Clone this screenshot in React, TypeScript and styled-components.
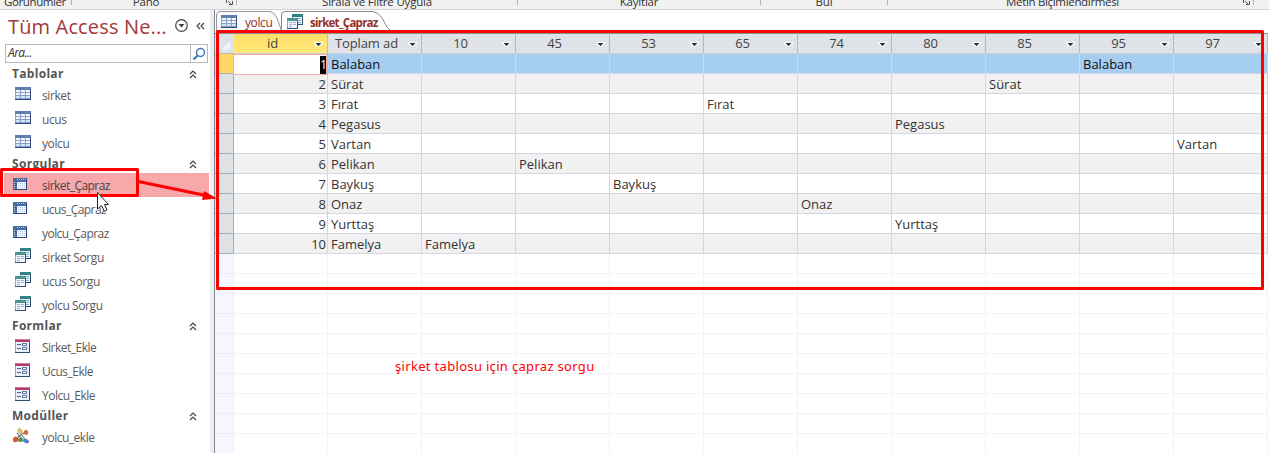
import React from "react";
import styled, { createGlobalStyle } from "styled-components";

const Global = createGlobalStyle`
  * { box-sizing: border-box; }
  body { margin: 0; background: #fff; overflow: hidden; font-family: "Open Sans", "Noto Sans", sans-serif; }
`;

const Window = styled.div`
  position: relative;
  width: 1269px;
  height: 453px;
  overflow: hidden;
  display: flex;
  flex-direction: column;
  background: #fff;
`;

const Ribbon = styled.header`
  display: flex;
  flex: none;
  height: 10px;
  background: #f1f1f1;
  border-bottom: 1px solid #d2d2d2;
`;
const RibbonGroup = styled.div<{ $w: number; $pad?: number }>`
  position: relative;
  flex: none;
  display: flex;
  justify-content: center;
  width: ${(p) => p.$w}px;
  height: 5px;
  padding-right: ${(p) => p.$pad ?? 0}px;
  border-right: 1px solid #b4b4b4;
`;
const RibbonLabel = styled.span<{ $ls?: number }>`
  margin-top: -7px;
  height: 17px;
  font-size: 11.5px;
  line-height: 17px;
  letter-spacing: ${(p) => p.$ls ?? -0.2}px;
  white-space: nowrap;
  color: #333;
`;
const Launcher = styled.svg`
  position: absolute;
  right: 2px;
  top: 0;
`;

const Body = styled.div`
  display: flex;
  flex: 1;
  min-height: 0;
`;

const Sidebar = styled.aside`
  flex: none;
  display: flex;
  flex-direction: column;
  width: 215px;
  border-right: 1px solid #80848c;
  background: linear-gradient(to right, #fff 210px, #edeef2 210px);
`;
const TitleRow = styled.div`
  display: flex;
  align-items: center;
  height: 34px;
  padding-left: 8px;
  svg { margin-top: -2px; }
`;
const Title = styled.h1`
  margin: 0;
  width: 166px;
  font-size: 20px;
  font-weight: 400;
  line-height: 34px;
  letter-spacing: 0.15px;
  white-space: nowrap;
  color: #a4373a;
`;
const SearchBox = styled.div`
  display: flex;
  flex: none;
  width: 203px;
  height: 19px;
  margin: 0 0 2px 5px;
  border: 1px solid #b9b9b9;
`;
const SearchText = styled.span`
  flex: 1;
  padding-left: 2px;
  font-size: 12px;
  font-style: italic;
  line-height: 16px;
  letter-spacing: -0.6px;
  color: #333;
`;
const SearchButton = styled.span`
  display: flex;
  align-items: center;
  justify-content: center;
  width: 17px;
  border-left: 1px solid #b9b9b9;
`;
const GroupHeader = styled.div`
  display: flex;
  flex: none;
  align-items: center;
  justify-content: space-between;
  height: 18px;
  padding: 0 17px 0 12px;
  font-size: 12px;
  font-weight: 700;
  line-height: 18px;
  letter-spacing: 0.3px;
  color: #555;
`;
const Item = styled.div<{ $selected?: boolean }>`
  display: flex;
  flex: none;
  align-items: center;
  width: 205px;
  height: 24px;
  margin-left: 4px;
  font-size: 12px;
  line-height: 22px;
  color: ${(p) => (p.$selected ? "#444" : "#5a5a5a")};
  background: ${(p) => (p.$selected ? "#f7a8ab" : "transparent")};
`;
const IconSlot = styled.span<{ $x: number }>`
  display: flex;
  width: 38px;
  padding-left: ${(p) => p.$x - 4}px;
  svg { margin-top: -3px; }
`;
const ItemText = styled.span<{ $ls: number }>`
  padding-top: 2px;
  letter-spacing: ${(p) => p.$ls}px;
  white-space: nowrap;
`;

const Content = styled.main`
  flex: 1;
  min-width: 0;
  display: flex;
  flex-direction: column;
`;
const Tabs = styled.div`
  position: relative;
  display: flex;
  flex: none;
  height: 23px;
`;
const TabShapes = styled.svg`
  position: absolute;
  left: 0;
  top: 0;
`;
const Tab = styled.div<{ $w: number; $pad: number; $gap: number; $active?: boolean }>`
  position: relative;
  display: flex;
  align-items: center;
  gap: ${(p) => p.$gap}px;
  width: ${(p) => p.$w}px;
  padding: 1px 0 0 ${(p) => p.$pad}px;
  font-size: ${(p) => (p.$active ? 11.5 : 12)}px;
  font-weight: ${(p) => (p.$active ? 700 : 400)};
  letter-spacing: ${(p) => (p.$active ? -0.75 : -0.4)}px;
  white-space: nowrap;
  color: #95302f;
  svg { margin-top: -2px; }
`;

const Sheet = styled.div`
  display: grid;
  grid-template-columns: 19px repeat(11, 94px) 1px;
  grid-template-rows: 21px;
  grid-auto-rows: 20px;
`;
const HeadCell = styled.div<{ $active?: boolean }>`
  display: flex;
  align-items: center;
  padding: 0 4px 0 0;
  border-top: 1px solid #8a8e94;
  border-right: 1px solid ${(p) => (p.$active ? "#c5bfa0" : "#b4b9c0")};
  border-bottom: 1px solid #cdd2d9;
  font-size: 13px;
  line-height: 18px;
  color: #444;
  background: ${(p) => (p.$active ? "linear-gradient(#ffdf69, #ffe979)" : "#dfe2e6")};
  svg { flex: none; margin-top: 2px; }
`;
const HeadText = styled.span`
  flex: 1;
  padding: 0 3px 1px 0;
  text-align: center;
  letter-spacing: -0.1px;
  white-space: nowrap;
`;
const CornerCell = styled.div`
  display: flex;
  align-items: flex-end;
  justify-content: flex-end;
  padding: 0 3px 3px 0;
  border-top: 1px solid #8a8e94;
  background: #dfe2e6;
  border-bottom: 1px solid #b4b9c0;
`;
const Selector = styled.div<{ $active?: boolean; $empty?: boolean }>`
  border-right: 1px solid ${(p) => (p.$empty ? "#eceef4" : "#a9adb3")};
  border-bottom: 1px solid ${(p) => (p.$empty ? "#eaecf5" : "#a9adb3")};
  background: ${(p) => (p.$empty ? "#f6f7fe" : p.$active ? "#ffd863" : "#dfe2e5")};
`;
type Tone = "current" | "even" | "odd" | "empty";
const fills: Record<Tone, string> = { current: "#a5cef1", even: "#f1f1f1", odd: "#fff", empty: "#fff" };
const Cell = styled.div<{ $tone: Tone; $right?: boolean }>`
  height: 20px;
  padding: 0 ${(p) => (p.$right ? 1 : 3)}px;
  border-right: 1px solid ${(p) => (p.$tone === "empty" ? "#f2f3f4" : "#d0d7e5")};
  border-bottom: 1px solid ${(p) => (p.$tone === "empty" ? "#f2f3f4" : "#d0d7e5")};
  font-size: 13px;
  line-height: 20px;
  text-align: ${(p) => (p.$right ? "right" : "left")};
  white-space: nowrap;
  color: ${(p) => (p.$tone === "current" ? "#111" : "#333")};
  background: ${(p) => fills[p.$tone]};
`;
const EditCell = styled.div`
  display: flex;
  justify-content: flex-end;
  height: 21px;
  width: 95px;
  margin-left: -1px;
  padding: 1px 0 0;
  border: 1px solid #f5a9ac;
  border-right-width: 2px;
  background: #fff;
  z-index: 1;
`;
const Selection = styled.span`
  width: 6px;
  height: 18px;
  font-size: 12.5px;
  line-height: 18px;
  color: #fff;
  background: #000;
`;

const Overlay = styled.svg`
  position: absolute;
  inset: 0;
  z-index: 5;
`;
const Note = styled.p`
  position: absolute;
  left: 395px;
  top: 357px;
  margin: 0;
  font-family: "Noto Sans", sans-serif;
  font-size: 13px;
  line-height: 18px;
  letter-spacing: 0.32px;
  white-space: nowrap;
  color: #f00;
`;

const TableIcon = () => (
  <svg width="16" height="13" shapeRendering="crispEdges">
    <rect width="16" height="13" fill="#8ba0c6" />
    <rect width="16" height="3" fill="#5f7fb5" />
    {[3, 6, 9].map((y) =>
      [1, 6, 11].map((x) => <rect key={`${x}-${y}`} x={x} y={y} width="4" height="2" fill={y === 9 ? "#d3e1f5" : "#f4f8ff"} />)
    )}
    <path d="M0 12.5H16M15.5 2V13" stroke="#314b7e" />
  </svg>
);
const CrosstabIcon = () => (
  <svg width="14" height="12" shapeRendering="crispEdges">
    <rect width="14" height="12" fill="#4a6aa2" />
    <rect x="4" y="4" width="9" height="7" fill="#f3f7ff" />
    <path d="M4 1.5H13" stroke="#b9cbe8" strokeDasharray="1 1" />
    <path d="M1.500 4V11" stroke="#b9cbe8" strokeDasharray="1 1" />
    <path d="M5 5.500H12M5 7.500H12M5 9.500H12" stroke="#b4c5e2" strokeDasharray="1 1" />
    <path d="M0 11.500H14M13.500 0V12" stroke="#2b4478" />
  </svg>
);
const QueryIcon = () => (
  <svg width="16" height="15" shapeRendering="crispEdges">
    <rect x="5" y="0" width="11" height="11" fill="#8fa5c2" />
    <rect x="5" y="0" width="11" height="3" fill="#2f8184" />
    <rect x="6" y="3" width="9" height="7" fill="#edf3fc" />
    <path d="M11 4.500H14M11 6.500H14M11 8.500H14" stroke="#9ab0d0" />
    <path d="M15.500 3V11M6 10.500H16" stroke="#334d7b" />
    <rect x="0" y="4" width="11" height="11" fill="#8fa5c2" />
    <rect x="0" y="4" width="11" height="3" fill="#4a9694" />
    <rect x="1" y="7" width="9" height="7" fill="#f4f8ff" />
    <path d="M2 8.500H5M6 8.500H9M2 10.500H5M6 10.500H9M2 12.500H5" stroke="#9ab0d0" />
    <path d="M10.500 7V15M0 14.500H11" stroke="#334d7b" />
  </svg>
);
const FormIcon = () => (
  <svg width="15" height="14" shapeRendering="crispEdges">
    <rect width="15" height="14" fill="#8fa3c8" />
    <rect width="15" height="3" fill="#b83b6c" />
    <path d="M0 .5H15" stroke="#d0779a" />
    <rect x="1" y="3" width="13" height="10" fill="#eaf0fb" />
    <path d="M2 5.500H6M2 9.500H6" stroke="#4f5f8a" />
    <rect x="7.500" y="4.500" width="4" height="2" fill="#fff" stroke="#6678a4" />
    <rect x="7.500" y="8.500" width="4" height="2" fill="#fff" stroke="#6678a4" />
    <path d="M14.500 3V14M0 13.500H15" stroke="#334b78" />
  </svg>
);
const ModuleIcon = () => (
  <svg width="16" height="16">
    <path d="M3 11L12 4M7 4L13 13M4 5L9 11" stroke="#4a4a4a" strokeWidth="1.200" strokeDasharray="1.500 .6" />
    <ellipse cx="7" cy="3" rx="1.800" ry="2.600" transform="rotate(-30 7 3)" fill="#e6cf62" stroke="#a28b34" strokeWidth=".5" />
    <ellipse cx="13" cy="4.500" rx="1.800" ry="2.300" fill="#ea6841" stroke="#a33e20" strokeWidth=".5" />
    <ellipse cx="2.500" cy="11.500" rx="2.300" ry="2.500" fill="#e5532e" stroke="#9b3018" strokeWidth=".5" />
    <ellipse cx="7.500" cy="12" rx="2.300" ry="1.800" fill="#43a047" stroke="#23652b" strokeWidth=".5" />
    <ellipse cx="13" cy="13" rx="2.800" ry="1.700" transform="rotate(25 13 13)" fill="#4f83dd" stroke="#3058a5" strokeWidth=".5" />
  </svg>
);
const Chevrons = () => (
  <svg width="8" height="9" fill="none" stroke="#444" strokeWidth="1.200">
    <path d="M1 4L4 1L7 4M1 8L4 5L7 8" />
  </svg>
);
const DropArrow = () => (
  <svg width="9" height="5">
    <path d="M0 0H9V1.500L5.500 5H3.500L0 1.500Z" fill="#fff" />
    <path d="M1.500 1H7.500L4.500 4.200Z" fill="#2c3433" />
  </svg>
);
const LauncherIcon = () => (
  <Launcher width="9" height="7" fill="none" stroke="#555">
    <path d="M1.500 0V3M3 1L7 5M7.500 1V4.500H4" />
  </Launcher>
);

const icons = {
  table: { x: 15, ls: -0.4, El: TableIcon },
  crosstab: { x: 13, ls: -0.55, El: CrosstabIcon },
  query: { x: 15, ls: -0.4, El: QueryIcon },
  form: { x: 15, ls: -0.5, El: FormIcon },
  module: { x: 13, ls: -0.5, El: ModuleIcon },
};
const groups: { name: string; items: [keyof typeof icons, string][] }[] = [
  { name: "Tablolar", items: [["table", "sirket"], ["table", "ucus"], ["table", "yolcu"]] },
  {
    name: "Sorgular",
    items: [
      ["crosstab", "sirket_Çapraz"], ["crosstab", "ucus_Çapraz"], ["crosstab", "yolcu_Çapraz"],
      ["query", "sirket Sorgu"], ["query", "ucus Sorgu"], ["query", "yolcu Sorgu"],
    ],
  },
  { name: "Formlar", items: [["form", "Sirket_Ekle"], ["form", "Ucus_Ekle"], ["form", "Yolcu_Ekle"]] },
  { name: "Modüller", items: [["module", "yolcu_ekle"]] },
];
const columns = ["id", "Toplam ad", "10", "45", "53", "65", "74", "80", "85", "95", "97"];
const rows: [string, string][] = [
  ["Balaban", "95"], ["Sürat", "85"], ["Fırat", "65"], ["Pegasus", "80"], ["Vartan", "97"],
  ["Pelikan", "45"], ["Baykuş", "53"], ["Onaz", "74"], ["Yurttaş", "80"], ["Famelya", "10"],
];

export default function App() {
  return (
    <Window>
      <Global />
      <Ribbon>
        <RibbonGroup $w={72} $pad={1}><RibbonLabel $ls={-0.4}>Görünümler</RibbonLabel></RibbonGroup>
        <RibbonGroup $w={165} $pad={16}><RibbonLabel>Pano</RibbonLabel><LauncherIcon /></RibbonGroup>
        <RibbonGroup $w={281}><RibbonLabel>Sırala ve Filtre Uygula</RibbonLabel></RibbonGroup>
        <RibbonGroup $w={243}><RibbonLabel>Kayıtlar</RibbonLabel></RibbonGroup>
        <RibbonGroup $w={127}><RibbonLabel>Bul</RibbonLabel></RibbonGroup>
        <RibbonGroup $w={366} $pad={16}><RibbonLabel $ls={-0.33}>Metin Biçimlendirmesi</RibbonLabel><LauncherIcon /></RibbonGroup>
      </Ribbon>
      <Body>
        <Sidebar>
          <TitleRow>
            <Title>Tüm Access Ne...</Title>
            <svg width="32" height="14" fill="none" stroke="#444" strokeWidth="1.200">
              <circle cx="7.500" cy="6.500" r="5.800" />
              <path d="M4.500 5H10.500L7.500 8.500Z" fill="#444" stroke="none" />
              <path d="M26 4L23 7L26 10M30 4L27 7L30 10" />
            </svg>
          </TitleRow>
          <SearchBox>
            <SearchText>Ara...</SearchText>
            <SearchButton>
              <svg width="14" height="14" fill="none" stroke="#3f78bb">
                <circle cx="8.500" cy="5.500" r="4" strokeWidth="1.500" />
                <path d="M5.500 8.500L1.500 12.500" strokeWidth="2.200" />
              </svg>
            </SearchButton>
          </SearchBox>
          {groups.map((g) => (
            <React.Fragment key={g.name}>
              <GroupHeader>{g.name}<Chevrons /></GroupHeader>
              {g.items.map(([kind, label]) => {
                const { x, ls, El } = icons[kind];
                return (
                  <Item key={label} $selected={label === "sirket_Çapraz"}>
                    <IconSlot $x={x}><El /></IconSlot>
                    <ItemText $ls={ls}>{label}</ItemText>
                  </Item>
                );
              })}
            </React.Fragment>
          ))}
        </Sidebar>
        <Content>
          <Tabs>
            <TabShapes width="200" height="23">
              <path d="M1.500 23V5Q1.500 1.500 5 1.500H55Q59 2 62 8L66 19V23" fill="#fbfbfc" stroke="#92969e" />
              <path d="M66.500 23V5Q66.500 1.500 70 1.500H158Q163 2 167 8L172 17Q175 21 179 22.500" fill="#fff" stroke="#92887f" />
            </TabShapes>
            <Tab $w={66} $pad={6} $gap={8}><TableIcon />yolcu</Tab>
            <Tab $w={110} $pad={6} $gap={7} $active><QueryIcon />sirket_Çapraz</Tab>
          </Tabs>
          <Sheet>
            <CornerCell>
              <svg width="11" height="11"><path d="M11 0V11H0Z" fill="#f1f4fb" stroke="#c5ccdb" strokeWidth=".5" /></svg>
            </CornerCell>
            {columns.map((c) => (
              <HeadCell key={c} $active={c === "id"}><HeadText>{c}</HeadText><DropArrow /></HeadCell>
            ))}
            <div />
            {rows.map(([name, col], i) => {
              const tone: Tone = i === 0 ? "current" : i % 2 ? "even" : "odd";
              return (
                <React.Fragment key={name}>
                  <Selector $active={i === 0} />
                  {i === 0 ? <EditCell><Selection>1</Selection></EditCell> : <Cell $tone={tone} $right>{i + 1}</Cell>}
                  <Cell $tone={tone}>{name}</Cell>
                  {columns.slice(2).map((c) => <Cell key={c} $tone={tone}>{c === col ? name : ""}</Cell>)}
                  <div />
                </React.Fragment>
              );
            })}
            {Array.from({ length: 10 }, (_, r) => (
              <React.Fragment key={r}>
                <Selector $empty />
                {columns.map((c) => <Cell key={c} $tone="empty" />)}
                <div />
              </React.Fragment>
            ))}
          </Sheet>
        </Content>
      </Body>
      <Note>şirket tablosu için çapraz sorgu</Note>
      <Overlay width="1269" height="453" fill="none">
        <g stroke="#f00" strokeWidth="3">
          <rect x="1.500" y="169.500" width="136" height="26" strokeLinejoin="round" />
          <rect x="217.500" y="31.500" width="1045" height="257" strokeLinejoin="round" />
          <path d="M136 181L206 195.500" />
        </g>
        <path d="M217 198.500L202 200L204 191Z" fill="#f00" />
        <path d="M97.500 192.500V209L101.500 205.500L104.500 211.500L107 210L104.500 204.500H108.500Z" fill="#fff" stroke="#222" />
      </Overlay>
    </Window>
  );
}
